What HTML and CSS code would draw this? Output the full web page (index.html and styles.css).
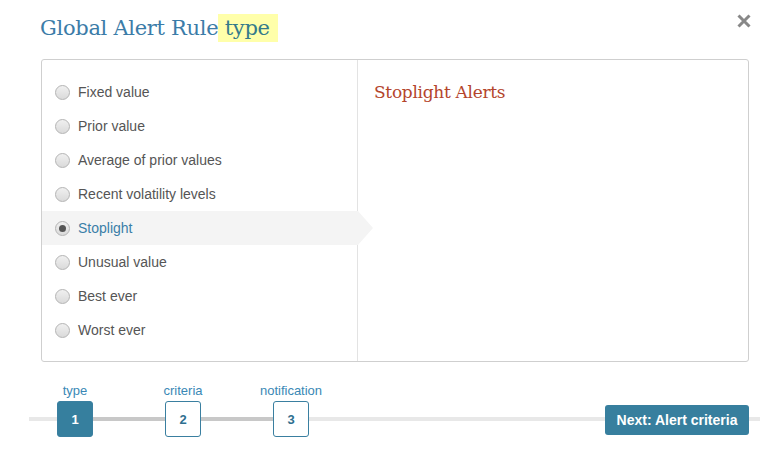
FILE: index.html
```html
<!DOCTYPE html>
<html>
<head>
<meta charset="utf-8">
<link rel="stylesheet" href="styles.css">
</head>
<body>
<div class="modal">
  <div class="header">
    <h1 class="title">Global Alert Rule<span class="hl"> type</span></h1>
    <button class="close" aria-label="close">
      <svg width="14" height="14" viewBox="0 0 14 14"><path d="M1.5 1.5 L12.5 12.5 M12.5 1.5 L1.5 12.5" stroke="#888" stroke-width="3" stroke-linecap="butt"/></svg>
    </button>
  </div>
  <div class="panel">
    <ul class="options">
      <li class="opt"><span class="radio"></span>Fixed value</li>
      <li class="opt"><span class="radio"></span>Prior value</li>
      <li class="opt"><span class="radio"></span>Average of prior values</li>
      <li class="opt"><span class="radio"></span>Recent volatility levels</li>
      <li class="opt selected"><span class="radio checked"></span>Stoplight</li>
      <li class="opt"><span class="radio"></span>Unusual value</li>
      <li class="opt"><span class="radio"></span>Best ever</li>
      <li class="opt"><span class="radio"></span>Worst ever</li>
    </ul>
    <div class="detail">
      <h2 class="detail-title">Stoplight Alerts</h2>
    </div>
  </div>
  <div class="footer">
    <div class="steps">
      <div class="step active"><span class="step-label">type</span><span class="step-box">1</span></div>
      <div class="connector"></div>
      <div class="step"><span class="step-label">criteria</span><span class="step-box">2</span></div>
      <div class="connector"></div>
      <div class="step"><span class="step-label">notification</span><span class="step-box">3</span></div>
    </div>
    <button class="next">Next: Alert criteria</button>
  </div>
</div>
</body>
</html>
```
FILE: styles.css
```css
* { box-sizing: border-box; }
html, body { margin: 0; padding: 0; background: #fff; }
body { font-family: "Liberation Sans", Arial, sans-serif; width: 769px; height: 457px; overflow: hidden; }

.modal { display: flex; flex-direction: column; }

.header {
  height: 59px;
  display: flex;
  justify-content: space-between;
  align-items: flex-start;
  padding-left: 40px;
  padding-right: 18px;
}
.title {
  margin: 0;
  margin-top: 14px;
  font-family: "DejaVu Serif", "Liberation Serif", serif;
  font-weight: normal;
  font-size: 21px;
  line-height: 29px;
  color: #3b7ca8;
  letter-spacing: -0.3px;
  white-space: pre;
}
.hl {
  background: #ffffaa;
  color: #347a8a;
  padding: 2px 8px 2px 0;
}
.close {
  margin-top: 14px;
  border: 0;
  background: none;
  padding: 0;
  width: 14px;
  height: 14px;
  display: flex;
}

.panel {
  margin-left: 41px;
  width: 708px;
  height: 303px;
  border: 1px solid #cfcfcf;
  border-radius: 3px;
  display: flex;
}
.options {
  list-style: none;
  margin: 0;
  padding: 15px 0 0 0;
  width: 316px;
  border-right: 1px solid #e3e3e3;
}
.opt {
  position: relative;
  height: 34px;
  display: flex;
  align-items: center;
  padding-left: 13px;
  font-size: 14px;
  color: #555;
}
.opt.selected {
  background: #f4f4f4;
  color: #3a7fa8;
  margin-right: -1px;
}
.opt.selected::after {
  content: "";
  position: absolute;
  right: -15px;
  top: 0;
  border-top: 17px solid transparent;
  border-bottom: 17px solid transparent;
  border-left: 15px solid #f4f4f4;
}
.radio {
  width: 15px;
  height: 15px;
  border-radius: 50%;
  border: 1px solid #b4b4b4;
  background: linear-gradient(#f0f0f0, #dadada);
  margin-right: 8px;
  display: flex;
  align-items: center;
  justify-content: center;
}
.radio.checked::before {
  content: "";
  width: 7px;
  height: 7px;
  border-radius: 50%;
  background: #555;
}
.detail {
  flex: 1;
  padding: 20px 16px;
}
.detail-title {
  margin: 0;
  font-family: "DejaVu Serif", "Liberation Serif", serif;
  font-weight: normal;
  font-size: 17px;
  line-height: 24px;
  color: #b4452c;
  letter-spacing: -0.3px;
}

.footer {
  margin-top: 22px;
  margin-left: 29px;
  width: 731px;
  height: 53px;
  display: flex;
  justify-content: space-between;
  align-items: flex-end;
  background: linear-gradient(#e8e8e8, #e8e8e8) no-repeat 0 33px / 100% 4px;
}
.steps {
  display: flex;
  align-items: flex-end;
  padding-left: 28px;
}
.step {
  width: 36px;
  display: flex;
  flex-direction: column;
  align-items: center;
}
.step-label {
  font-size: 13px;
  line-height: 15px;
  color: #3a88b5;
  white-space: nowrap;
  margin-bottom: 3px;
}
.step-box {
  width: 36px;
  height: 36px;
  border: 1px solid #3a7fa0;
  border-radius: 3px;
  background: #fff;
  color: #2f6f8f;
  font-weight: bold;
  font-size: 13px;
  display: flex;
  align-items: center;
  justify-content: center;
}
.step.active .step-box {
  background: #367f9e;
  color: #fff;
}
.connector {
  width: 72px;
  height: 4px;
  background: #c8c8c8;
  margin-bottom: 16px;
}
.next {
  margin-right: 11px;
  margin-bottom: 2px;
  height: 30px;
  width: 144px;
  border: 0;
  border-radius: 3px;
  background: #377f9e;
  color: #fff;
  font-family: "Liberation Sans", Arial, sans-serif;
  font-weight: bold;
  font-size: 14px;
  padding: 0;
}
```
